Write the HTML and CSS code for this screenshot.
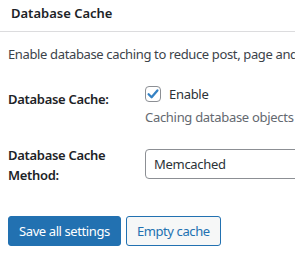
FILE: index.html
```html
<!DOCTYPE html>
<html lang="en">
<head>
  <meta charset="UTF-8">
  <title>Database Cache</title>
  <link rel="stylesheet" href="styles.css">
</head>
<body>
  <div class="postbox">
    <h3 class="postbox-title">Database Cache</h3>
    <div class="inside">
      <p class="intro">Enable database caching to reduce post, page and feed creation time.</p>
      <div class="form-table">
        <div class="row">
          <div class="th">Database Cache:</div>
          <div class="td">
            <label class="check-line">
              <span class="checkbox">
                <svg width="14" height="14" viewBox="0 0 14 14"><path d="M2.6 7.2 L5.6 10.2 L11.4 3.4" fill="none" stroke="#3582c4" stroke-width="2.3" stroke-linecap="round" stroke-linejoin="round"/></svg>
              </span>
              Enable
            </label>
            <p class="description">Caching database objects decreases the response time of your site.</p>
          </div>
        </div>
        <div class="row">
          <div class="th">Database Cache Method:</div>
          <div class="td">
            <div class="select">Memcached</div>
          </div>
        </div>
      </div>
      <div class="actions">
        <button class="button button-primary">Save all settings</button>
        <button class="button">Empty cache</button>
      </div>
    </div>
  </div>
</body>
</html>
```

FILE: styles.css
```css
* {
  margin: 0;
  padding: 0;
  box-sizing: border-box;
}

body {
  font-family: 'Noto Sans', sans-serif;
  font-size: 13px;
  letter-spacing: -0.3px;
  color: #3c434a;
  background-color: #fff;
  overflow: hidden;
}

.postbox {
  width: 600px;
}

.postbox-title {
  height: 32px;
  padding: 3px 11px 0;
  font-size: 13px;
  font-weight: 600;
  letter-spacing: 0;
  line-height: 20px;
  color: #1d2327;
  border-bottom: 1px solid #dcdcde;
}

.inside {
  padding: 0 8px;
}

.intro {
  margin-top: 12px;
  line-height: 20px;
  letter-spacing: -0.36px;
  white-space: nowrap;
}

.form-table {
  display: flex;
  flex-direction: column;
  gap: 18px;
  margin-top: 20px;
}

.row {
  display: grid;
  grid-template-columns: 137px 1fr;
}

.th {
  font-weight: 600;
  color: #1d2327;
  line-height: 20px;
  padding-right: 10px;
}

.row:first-child .th {
  padding-top: 5px;
}

.check-line {
  display: flex;
  align-items: center;
  gap: 8px;
  height: 20px;
  color: #2c3338;
}

.checkbox {
  width: 16px;
  height: 16px;
  border: 1px solid #8c8f94;
  border-radius: 4px;
  display: flex;
  align-items: center;
  justify-content: center;
}

.description {
  margin-top: 3px;
  line-height: 20px;
  color: #646970;
  white-space: nowrap;
}

.select {
  margin-top: 4px;
  width: 300px;
  height: 30px;
  border: 1px solid #8c8f94;
  border-radius: 4px;
  padding: 0 8px;
  line-height: 28px;
  color: #2c3338;
}

.actions {
  display: flex;
  gap: 5px;
  margin-top: 31px;
}

.button {
  font-family: inherit;
  font-size: 13px;
  letter-spacing: -0.4px;
  height: 30px;
  padding: 0 10px;
  border: 1px solid #2271b1;
  border-radius: 3px;
  background-color: #f6f7f7;
  color: #2271b1;
  cursor: pointer;
}

.button-primary {
  background-color: #2271b1;
  color: #fff;
}
```
